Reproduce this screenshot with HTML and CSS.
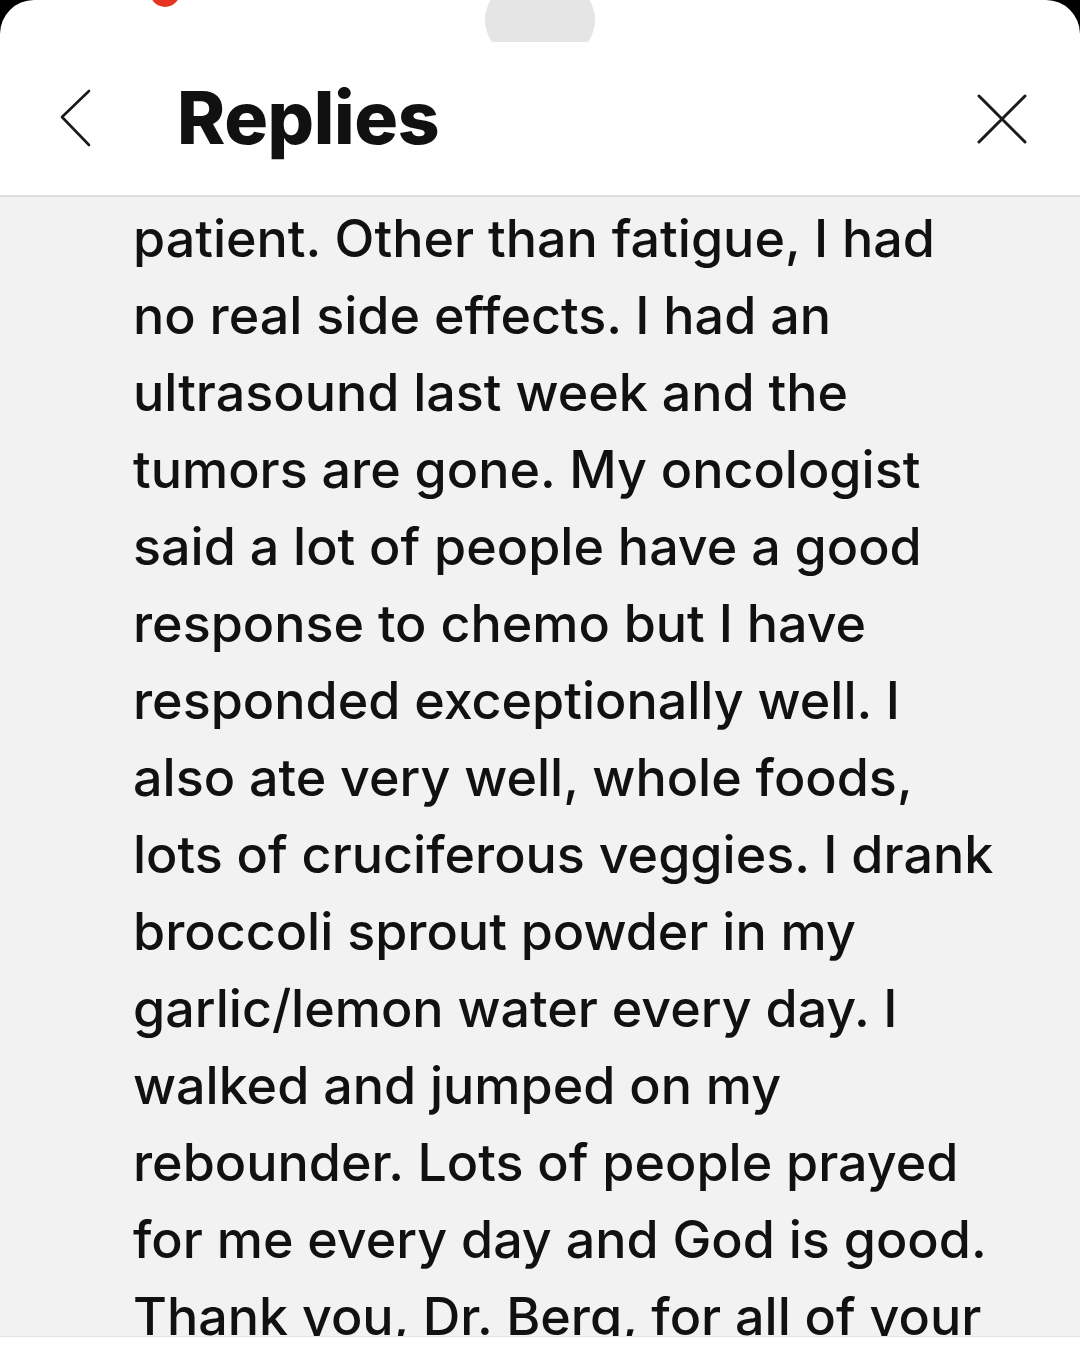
FILE: index.html
```html
<!DOCTYPE html>
<html lang="en">
<head>
    <meta charset="UTF-8">
    <title>Replies</title>
    <link rel="stylesheet" href="styles.css">
</head>
<body>
    <div class="sheet">
        <span class="rec-dot"></span>
        <div class="grabber"><div class="grabber-pill"></div></div>

        <header class="topbar">
            <button class="icon-btn back" aria-label="Back">
                <svg width="34" height="60" viewBox="0 0 34 60">
                    <polyline points="29,3 2,29 29,57" fill="none" stroke="#1a1a1a" stroke-width="2.6" stroke-linecap="round" stroke-linejoin="round"/>
                </svg>
            </button>
            <h1 class="title">Replies</h1>
            <button class="icon-btn close" aria-label="Close">
                <svg width="52" height="52" viewBox="0 0 52 52">
                    <path d="M3 3 L49 49 M49 3 L3 49" fill="none" stroke="#1a1a1a" stroke-width="3" stroke-linecap="round"/>
                </svg>
            </button>
        </header>

        <main class="thread">
            <p class="reply-text">
                patient. Other than fatigue, I had<br>
                no real side effects. I had an<br>
                ultrasound last week and the<br>
                tumors are gone. My oncologist<br>
                said a lot of people have a good<br>
                response to chemo but I have<br>
                responded exceptionally well. I<br>
                also ate very well, whole foods,<br>
                lots of cruciferous veggies. I drank<br>
                broccoli sprout powder in my<br>
                garlic/lemon water every day. I<br>
                walked and jumped on my<br>
                rebounder. Lots of people prayed<br>
                for me every day and God is good.<br>
                Thank you, Dr. Berg, for all of your
            </p>
        </main>

        <footer class="composer"></footer>
    </div>
</body>
</html>
```

FILE: styles.css
```css
:root {
    --ink: #111111;
    --sheet: #ffffff;
    --thread-bg: #f2f2f2;
    --line: #dedede;
    --grab: #e5e5e5;
    --font-main: 'Inter', 'Liberation Sans', sans-serif;
}
* {
    box-sizing: border-box;
    margin: 0;
    padding: 0;
}
html, body {
    height: 100%;
}
body {
    background: #000;
    font-family: var(--font-main);
    color: var(--ink);
    overflow: hidden;
}
.sheet {
    position: relative;
    height: 100%;
    background: var(--sheet);
    border-radius: 34px 34px 0 0;
    display: flex;
    flex-direction: column;
    overflow: hidden;
}
.rec-dot {
    position: absolute;
    left: 150px;
    top: -23px;
    width: 30px;
    height: 30px;
    border-radius: 50%;
    background: #e5341f;
}
.grabber {
    height: 42px;
    display: flex;
    justify-content: center;
    overflow: hidden;
}
.grabber-pill {
    width: 110px;
    height: 76px;
    margin-top: -18px;
    border-radius: 40px;
    background: var(--grab);
}
.topbar {
    height: 155px;
    display: flex;
    align-items: center;
    padding: 0 52px 0 60px;
    border-bottom: 2px solid var(--line);
}
.icon-btn {
    background: none;
    border: none;
    display: flex;
    align-items: center;
}
.back {
    margin-top: -2px;
}
.title {
    flex: 1;
    margin-left: 83px;
    margin-top: -2px;
    font-size: 73px;
    font-weight: 800;
    letter-spacing: -0.4px;
}
.close {
    margin-top: 1px;
}
.thread {
    flex: 1;
    background: var(--thread-bg);
    overflow: hidden;
    padding: 3px 0 0 133px;
}
.reply-text {
    font-size: 52px;
    font-weight: 500;
    line-height: 77px;
    white-space: nowrap;
}
.composer {
    height: 12px;
    background: var(--sheet);
    border-top: 1px solid #e2e2e2;
}
```
